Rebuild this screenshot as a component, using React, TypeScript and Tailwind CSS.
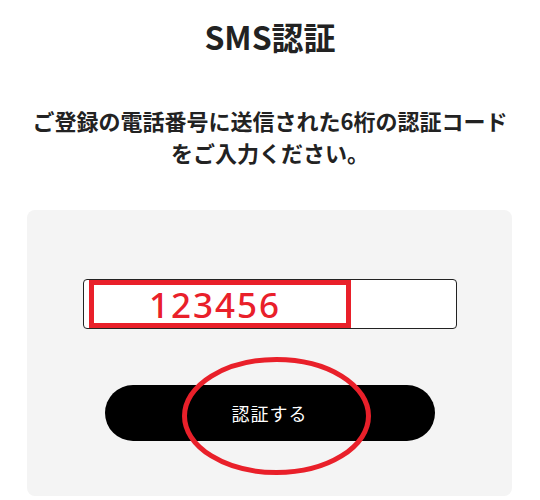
export default function App() {
  return (
    <div className="w-[540px] h-[500px] bg-white overflow-hidden font-['Noto_Sans_CJK_JP','Noto_Sans',sans-serif] text-[#222]">
      <h1 className="pt-3 text-center text-[32px] leading-[48px] font-bold">SMS認証</h1>

      <p className="mt-[44px] text-center text-[22px] leading-[32px] font-bold">
        ご登録の電話番号に送信された6桁の認証コード
        <br />
        をご入力ください。
      </p>

      <div className="relative mt-[42px] mx-[27px] w-[485px] rounded-[8px] bg-[#f4f4f4] pt-[69px] pb-[55px]">
        <div className="relative mx-auto w-[374px] h-[50px] rounded-[4px] border border-[#222] bg-white">
          {/* highlighted value */}
          <div className="absolute left-[5px] top-0 w-[262px] h-[48px] border-[5px] border-[#e9202a] flex items-center justify-center pr-[9px]">
            <span className="font-['Noto_Sans',sans-serif] text-[35px] leading-none font-medium text-[#e9202a] tracking-[2px]">
              123456
            </span>
          </div>
        </div>

        <button className="mt-[56px] mx-auto flex items-center justify-center w-[330px] h-[56px] rounded-full bg-black text-white text-[18px] tracking-[1px]">
          認証する
        </button>

        <svg
          className="absolute left-[155px] top-[147px] pointer-events-none"
          width="189"
          height="118"
          viewBox="0 0 189 118"
        >
          <ellipse cx="94.5" cy="59" rx="92" ry="56.5" fill="none" stroke="#e9202a" strokeWidth="5" />
        </svg>
      </div>
    </div>
  )
}
